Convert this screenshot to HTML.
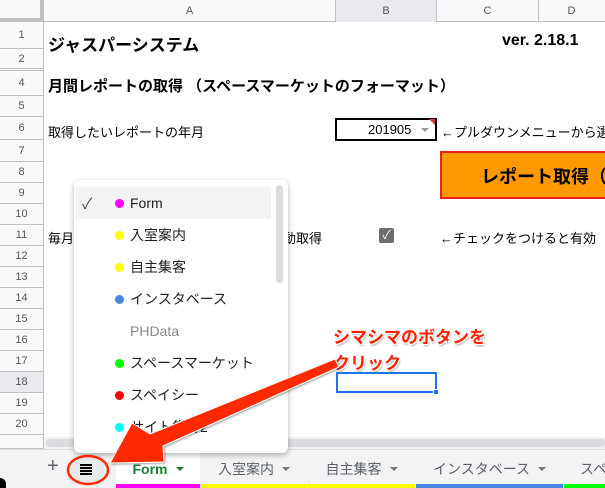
<!DOCTYPE html>
<html><head><meta charset="utf-8"><style>
*{margin:0;padding:0;box-sizing:border-box}
body{width:605px;height:488px;overflow:hidden;background:#fff;font-family:"Liberation Sans","Noto Sans CJK JP",sans-serif;position:relative;color:#000}
.a{position:absolute}
.hdr{background:#f8f9fa;color:#555;font-size:11px;text-align:center}
.rn{left:0;width:44px;border-bottom:1px solid #c0c0c0;border-right:1px solid #c0c0c0;background:#f8f9fa;color:#555;font-size:11px;display:flex;align-items:center;justify-content:center}
.t{font-size:13px;white-space:nowrap}
.item{position:absolute;left:0;width:214px;height:32px;font-size:14px;color:#202124;display:flex;align-items:center;white-space:nowrap}
.item .d{position:absolute;left:41px;width:9px;height:9px;border-radius:50%}
.item span.n{position:absolute;left:56px}
.tab{position:absolute;top:449px;height:39px;font-size:14px;color:#5f6368;display:flex;align-items:center;justify-content:center;white-space:nowrap}
.tab i{display:inline-block;margin-left:8px;width:0;height:0;border-left:4px solid transparent;border-right:4px solid transparent;border-top:4px solid #777}
.tab b.u{position:absolute;left:0;right:0;bottom:0;height:4px}
.ann{font-size:17px;font-weight:bold;color:#ff2200;white-space:nowrap;text-shadow:1px 1px 0 #fff,-1px -1px 0 #fff,1px -1px 0 #fff,-1px 1px 0 #fff,1px 2px 2px #999}
</style></head><body>
<div class="a" style="left:0;top:0;width:605px;height:22px;background:#f8f9fa;border-bottom:1px solid #c0c0c0"></div>
<div class="a" style="left:0;top:0;width:44px;height:22px;border-right:4px solid #c0c0c0;border-bottom:4px solid #c0c0c0;background:#f8f9fa"></div>
<div class="a hdr" style="left:44px;top:5px;width:291px">A</div>
<div class="a" style="left:335px;top:0;width:102px;height:22px;background:#e8eaed;border-left:1px solid #c0c0c0;border-right:1px solid #c0c0c0"></div>
<div class="a hdr" style="left:335px;top:5px;width:102px;background:none">B</div>
<div class="a hdr" style="left:437px;top:5px;width:101px;background:none">C</div>
<div class="a" style="left:538px;top:0;width:1px;height:22px;background:#c0c0c0"></div>
<div class="a hdr" style="left:538px;top:5px;width:67px;background:none">D</div>
<div class="a rn" style="top:22px;height:27px">1</div>
<div class="a rn" style="top:49px;height:22px;border-bottom:3px double #c0c0c0">2</div>
<div class="a rn" style="top:71px;height:25px">4</div>
<div class="a rn" style="top:96px;height:21px">5</div>
<div class="a rn" style="top:117px;height:23px">6</div>
<div class="a rn" style="top:140px;height:22px">7</div>
<div class="a rn" style="top:162px;height:21px">8</div>
<div class="a rn" style="top:183px;height:21px">9</div>
<div class="a rn" style="top:204px;height:21px">10</div>
<div class="a rn" style="top:225px;height:21px">11</div>
<div class="a rn" style="top:246px;height:21px">12</div>
<div class="a rn" style="top:267px;height:21px">13</div>
<div class="a rn" style="top:288px;height:21px">14</div>
<div class="a rn" style="top:309px;height:21px">15</div>
<div class="a rn" style="top:330px;height:21px">16</div>
<div class="a rn" style="top:351px;height:21px">17</div>
<div class="a rn" style="top:372px;height:21px;background:#e8eaed">18</div>
<div class="a rn" style="top:393px;height:21px">19</div>
<div class="a rn" style="top:414px;height:21px">20</div>
<div class="a rn" style="top:435px;height:14px"></div>
<div class="a" style="left:44px;top:437px;width:561px;height:12px;background:#f1f1f1"></div>
<div class="a" style="left:46px;top:439px;width:559px;height:8px;background:#dadce0;border-radius:4px"></div>
<div class="a" style="left:48px;top:31px;font-size:17px;font-weight:bold;white-space:nowrap">ジャスパーシステム</div>
<div class="a" style="left:502px;top:32px;font-size:16px;font-weight:bold;white-space:nowrap">ver. 2.18.1</div>
<div class="a" style="left:48px;top:75px;font-size:15px;font-weight:bold;white-space:nowrap">月間レポートの取得 （スペースマーケットのフォーマット）</div>
<div class="a t" style="left:48px;top:122px">取得したいレポートの年月</div>
<div class="a" style="left:335px;top:118px;width:102px;height:23px;border:2px solid #000"></div>
<div class="a t" style="left:368px;top:122px">201905</div>
<div class="a" style="left:421px;top:128px;border-left:4px solid transparent;border-right:4px solid transparent;border-top:4px solid #999"></div>
<div class="a" style="left:429px;top:119px;border-left:6px solid transparent;border-top:6px solid #e53935"></div>
<div class="a t" style="left:441px;top:122px">←プルダウンメニューから選</div>
<div class="a" style="left:440px;top:151px;width:170px;height:48px;background:#ff9900;border:2px solid #e8231b;overflow:hidden"><div style="position:absolute;left:39px;top:10px;font-size:18px;font-weight:bold;white-space:nowrap">レポート取得（メ</div></div>
<div class="a t" style="left:48px;top:228px">毎月</div>
<div class="a t" style="left:283px;top:228px">動取得</div>
<div class="a" style="left:379px;top:228px;width:15px;height:15px;background:#6d6d6d;border-radius:2px;color:#fff;font-size:12px;text-align:center;line-height:15px">✓</div>
<div class="a t" style="left:440px;top:228px">←チェックをつけると有効</div>
<div class="a" style="left:336px;top:372px;width:101px;height:21px;border:2px solid #1a73e8"></div>
<div class="a" style="left:433px;top:389px;width:6px;height:6px;background:#1a73e8;border:1px solid #fff"></div>
<div class="a" style="left:0;top:449px;width:605px;height:39px;background:#f1f3f4;border-top:1px solid #dadce0"></div>
<div class="a" style="left:47px;top:455px;font-size:20px;color:#5f6368">+</div>
<div class="a" style="left:70px;top:458px;width:34px;height:26px;background:#e6ebe7;border-radius:4px"></div>
<div class="a" style="left:80px;top:464px;width:12px;height:2px;background:#000;box-shadow:0 3px 0 #000,0 6px 0 #000,0 9px 0 #000"></div>
<div class="tab" style="left:116px;width:84px;background:#fff;color:#188038;font-weight:bold;font-size:14px">Form<i style="border-top-color:#188038"></i><b class="u" style="background:#ff00ff"></b></div>
<div class="tab" style="left:201px;width:106px">入室案内<i></i><b class="u" style="background:#ffff00"></b></div>
<div class="tab" style="left:308px;width:107px">自主集客<i></i><b class="u" style="background:#ffff00"></b></div>
<div class="tab" style="left:416px;width:147px">インスタベース<i></i><b class="u" style="background:#4a86e8"></b></div>
<div class="tab" style="left:564px;width:60px;justify-content:flex-start;padding-left:16px">スペ<b class="u" style="background:#00ff00"></b></div>
<div class="a" style="left:0;top:478px;width:6px;height:10px;background:#000;border-top-right-radius:10px"></div>
<div class="a" style="left:74px;top:180px;width:214px;height:273px;background:#fff;border-radius:6px;box-shadow:0 2px 6px rgba(0,0,0,.3);overflow:hidden">
<div class="a" style="left:1px;top:7px;width:196px;height:32px;background:#f1f3f4"></div>
<div class="a" style="left:202px;top:5px;width:7px;height:98px;background:#dadce0;border-radius:4px"></div>
<div class="item" style="top:7px"><span class="a" style="left:8px;color:#555;font-size:15px">✓</span><span class="d" style="background:#ff00ff"></span><span class="n">Form</span></div>
<div class="item" style="top:39px"><span class="d" style="background:#ffff00"></span><span class="n">入室案内</span></div>
<div class="item" style="top:71px"><span class="d" style="background:#ffff00"></span><span class="n">自主集客</span></div>
<div class="item" style="top:103px"><span class="d" style="background:#4a86e8"></span><span class="n">インスタベース</span></div>
<div class="item" style="top:135px;color:#888"><span class="n">PHData</span></div>
<div class="item" style="top:167px"><span class="d" style="background:#00ff00"></span><span class="n">スペースマーケット</span></div>
<div class="item" style="top:199px"><span class="d" style="background:#ff0000"></span><span class="n">スペイシー</span></div>
<div class="item" style="top:231px"><span class="d" style="background:#00ffff"></span><span class="n">サイト集客2</span></div>
</div>
<div class="a ann" style="left:333px;top:323px">シマシマのボタンを</div>
<div class="a ann" style="left:333px;top:349px">クリック</div>
<svg class="a" style="left:0;top:0" width="605" height="488">
<defs><filter id="s"><feDropShadow dx="1" dy="1" stdDeviation="1" flood-opacity=".4"/></filter></defs>
<polygon filter="url(#s)" points="335,359 339,367 163,446 164,462 110,463 132,423 150,434" fill="#ff2a00" stroke="#fff" stroke-width="1" stroke-linejoin="round"/>
<ellipse cx="88" cy="470" rx="20" ry="14" fill="none" stroke="#ff2a00" stroke-width="2.5"/>
</svg>
</body></html>
